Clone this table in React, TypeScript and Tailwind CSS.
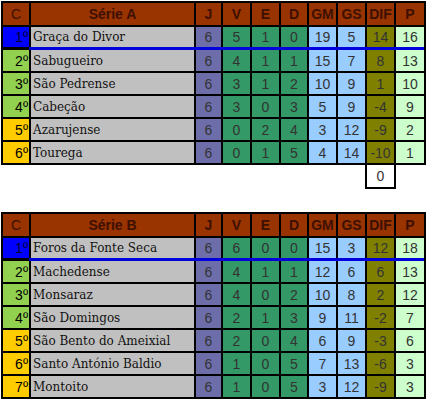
import React from "react";

type Team = {
  name: string;
  j: number;
  v: number;
  e: number;
  d: number;
  gm: number;
  gs: number;
  p: number;
};

const serieA: Team[] = [
  { name: "Graça do Divor", j: 6, v: 5, e: 1, d: 0, gm: 19, gs: 5, p: 16 },
  { name: "Sabugueiro", j: 6, v: 4, e: 1, d: 1, gm: 15, gs: 7, p: 13 },
  { name: "São Pedrense", j: 6, v: 3, e: 1, d: 2, gm: 10, gs: 9, p: 10 },
  { name: "Cabeção", j: 6, v: 3, e: 0, d: 3, gm: 5, gs: 9, p: 9 },
  { name: "Azarujense", j: 6, v: 0, e: 2, d: 4, gm: 3, gs: 12, p: 2 },
  { name: "Tourega", j: 6, v: 0, e: 1, d: 5, gm: 4, gs: 14, p: 1 },
];

const serieB: Team[] = [
  { name: "Foros da Fonte Seca", j: 6, v: 6, e: 0, d: 0, gm: 15, gs: 3, p: 18 },
  { name: "Machedense", j: 6, v: 4, e: 1, d: 1, gm: 12, gs: 6, p: 13 },
  { name: "Monsaraz", j: 6, v: 4, e: 0, d: 2, gm: 10, gs: 8, p: 12 },
  { name: "São Domingos", j: 6, v: 2, e: 1, d: 3, gm: 9, gs: 11, p: 7 },
  { name: "São Bento do Ameixial", j: 6, v: 2, e: 0, d: 4, gm: 6, gs: 9, p: 6 },
  { name: "Santo António Baldio", j: 6, v: 1, e: 0, d: 5, gm: 7, gs: 13, p: 3 },
  { name: "Montoito", j: 6, v: 1, e: 0, d: 5, gm: 3, gs: 12, p: 3 },
];

// column widths (cells), dividers are the 2px gaps
const cols =
  "grid grid-cols-[26px_163px_25px_27px_27px_26px_27px_27px_27px_28px] gap-x-[2px]";

const sans = "font-['Liberation_Sans',Arial,sans-serif]";
const serif = "font-['DejaVu_Serif','Liberation_Serif',serif]";

function posColor(i: number) {
  if (i === 0) return "bg-[#0000ff] text-[#000033]";
  if (i <= 3) return "bg-[#92d050] text-black";
  return "bg-[#ffcc00] text-black";
}

function Num({ v, bg }: { v: number; bg: string }) {
  return (
    <div
      className={`${bg} flex items-center justify-center text-[14px] text-[#333333] leading-none`}
    >
      {v}
    </div>
  );
}

function Table({ title, teams }: { title: string; teams: Team[] }) {
  return (
    <div className={`bg-black p-[2px] w-[425px] ${sans}`}>
      {/* header */}
      <div
        className={`${cols} h-[22px] text-[14px] text-[#3d1000] leading-none`}
      >
        <div className="bg-[#993300] flex items-center justify-center">C</div>
        {[title, "J", "V", "E", "D", "GM", "GS", "DIF", "P"].map((h) => (
          <div
            key={h}
            className="bg-[#993300] flex items-center justify-center font-bold"
          >
            {h}
          </div>
        ))}
      </div>

      {teams.map((t, i) => (
        <React.Fragment key={t.name}>
          {/* leader gets a blue line under it instead of the black one */}
          {i === 1 ? (
            <div className="h-[3px] pl-[26px]">
              <div className="h-full bg-[#0000dd]" />
            </div>
          ) : (
            <div className="h-[2px]" />
          )}
          <div className={`${cols} ${i === 0 ? "h-[20px]" : "h-[21px]"}`}>
            <div
              className={`${posColor(i)} flex items-center justify-end pr-[1px] text-[14px] leading-none`}
            >
              {i + 1}º
            </div>
            <div
              className={`bg-[#c0c0c0] flex items-center pl-[2px] text-[12px] text-[#111111] ${serif}`}
            >
              {t.name}
            </div>
            <Num v={t.j} bg="bg-[#6d6daa]" />
            <Num v={t.v} bg="bg-[#339966]" />
            <Num v={t.e} bg="bg-[#339966]" />
            <Num v={t.d} bg="bg-[#339966]" />
            <Num v={t.gm} bg="bg-[#99ccff]" />
            <Num v={t.gs} bg="bg-[#99ccff]" />
            <Num v={t.gm - t.gs} bg="bg-[#808000]" />
            <Num v={t.p} bg="bg-[#ccffcc]" />
          </div>
        </React.Fragment>
      ))}
    </div>
  );
}

export default function App() {
  return (
    <div className="w-[426px] h-[401px] bg-white overflow-hidden pt-[1px] pl-[1px]">
      <Table title="Série A" teams={serieA} />
      {/* checksum of DIF column */}
      <div
        className={`ml-[364px] w-[31px] h-[24px] border-[2px] border-t-0 border-black flex items-center justify-center text-[14px] text-[#333333] ${sans}`}
      >
        0
      </div>
      <div className="mt-[23px]">
        <Table title="Série B" teams={serieB} />
      </div>
    </div>
  );
}
